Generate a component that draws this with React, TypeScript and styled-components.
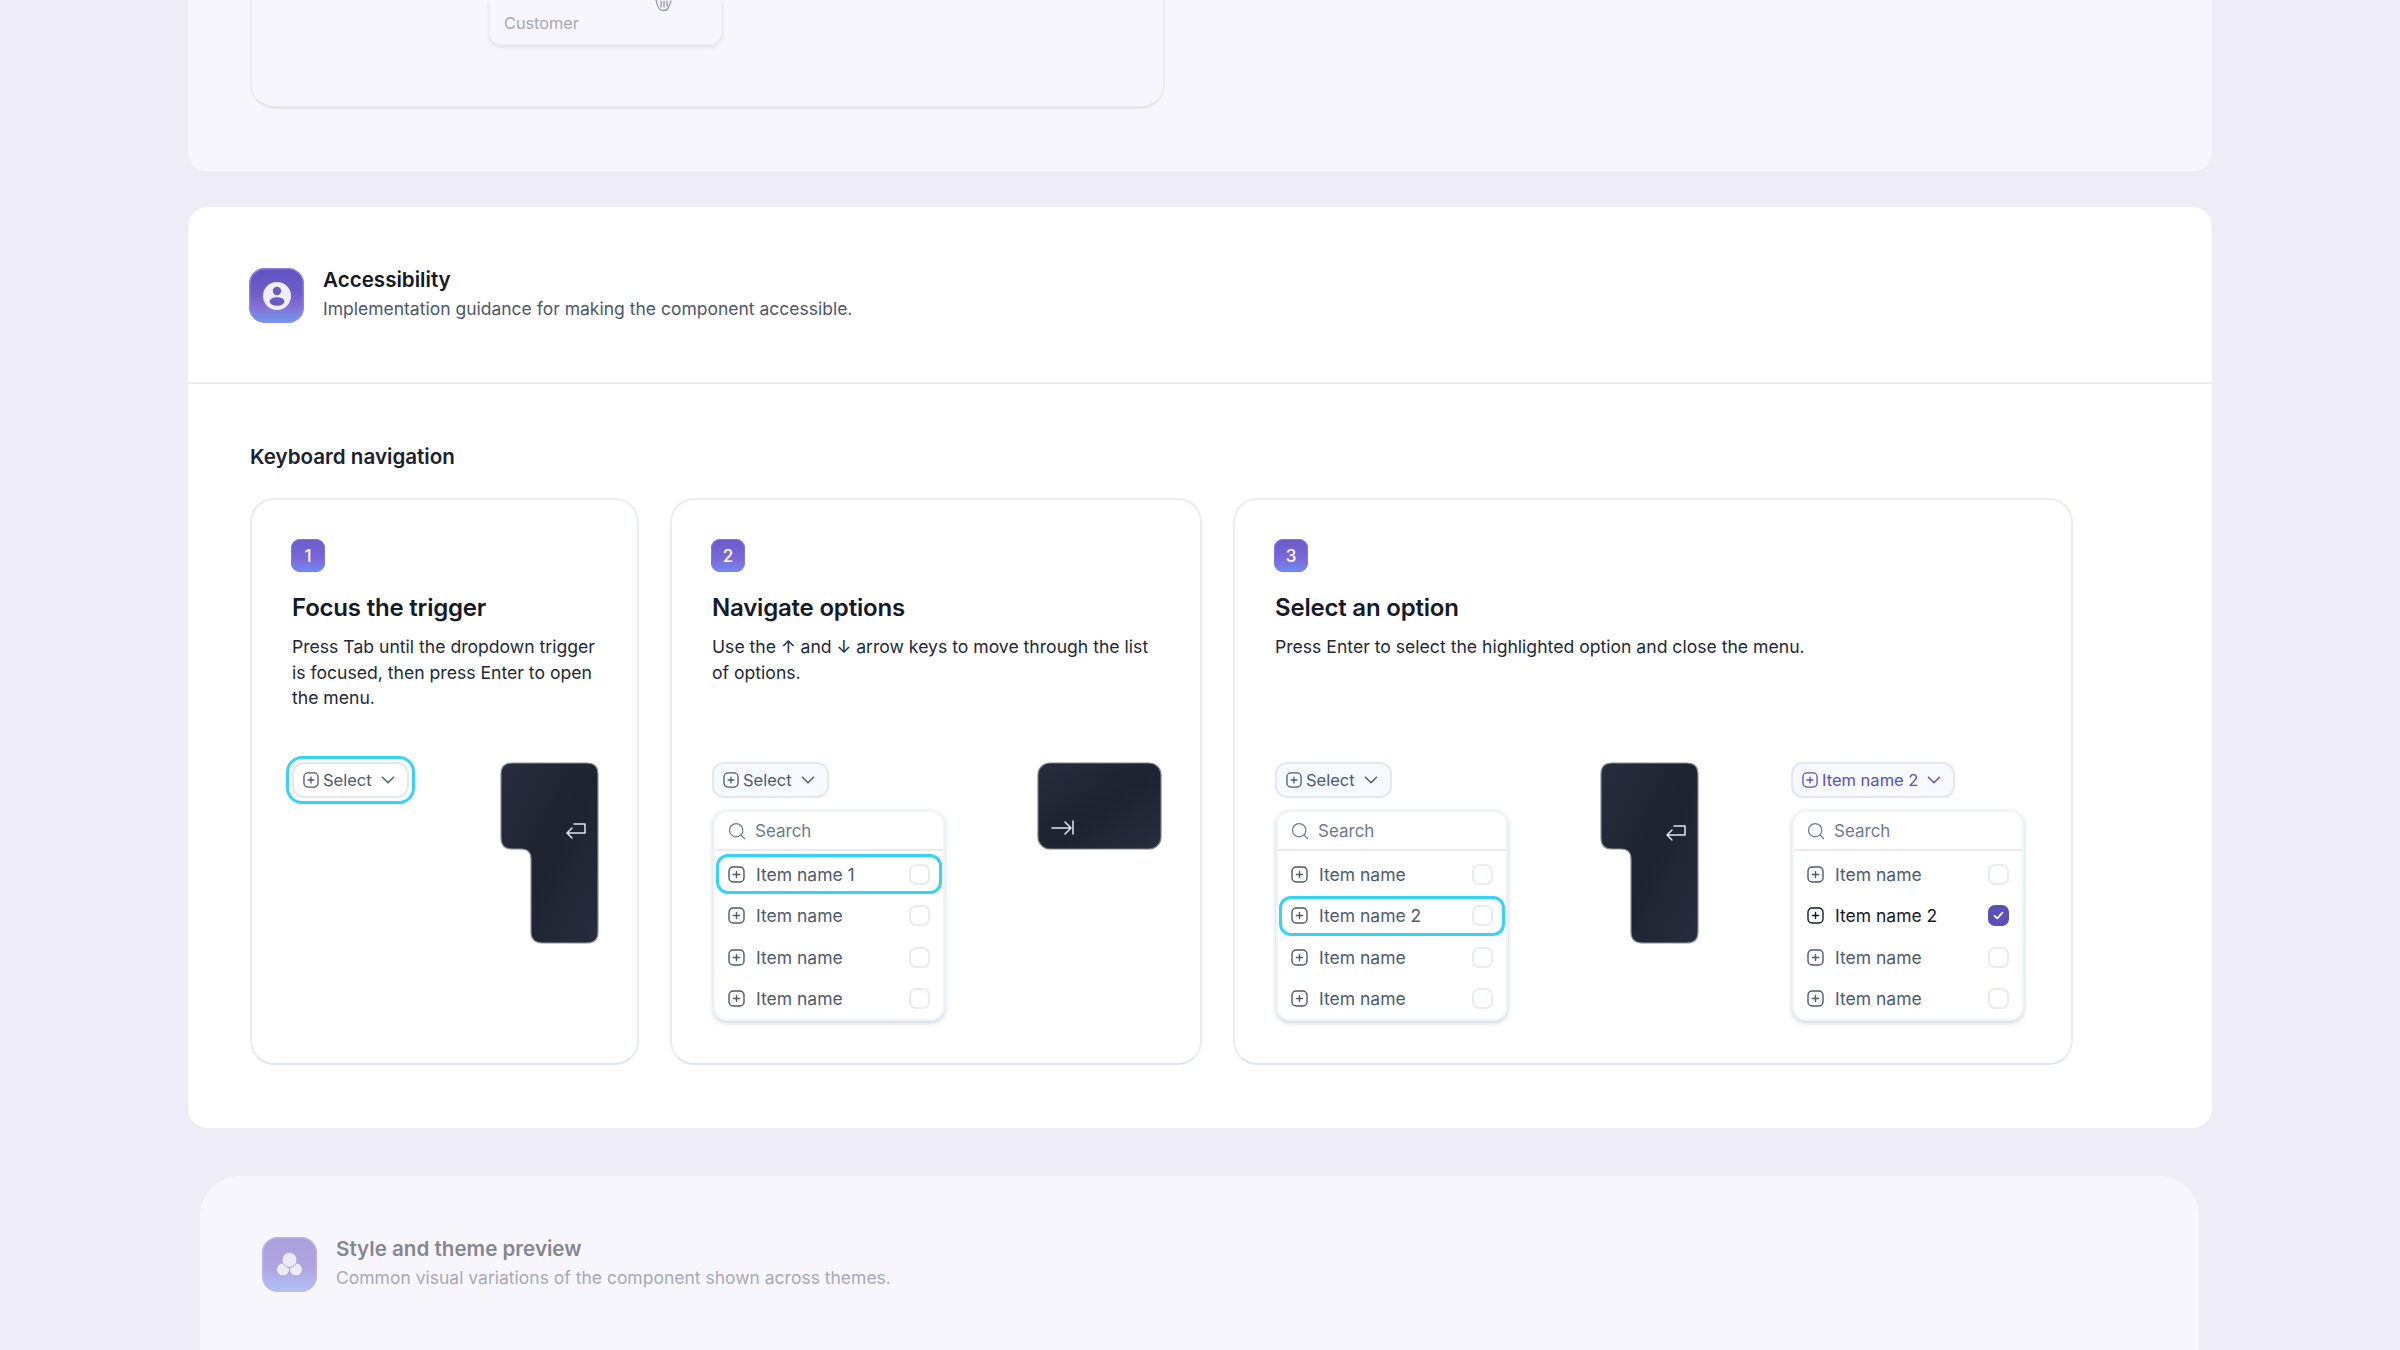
import React from 'react';
import styled, { createGlobalStyle } from 'styled-components';
import { ChevronDown, Search } from 'lucide-react';

const GlobalStyle = createGlobalStyle`
  html, body {
    margin: 0;
    padding: 0;
    background: #eeecf7;
    font-family: Inter, "Liberation Sans", sans-serif;
  }
  * {
    box-sizing: border-box;
  }
`;

const Page = styled.div`
  width: 2400px;
  height: 1350px;
  overflow: hidden;
  padding: 0 188px;
  background: #eeecf7;
`;

const UsagePanel = styled.section`
  height: 171px;
  padding: 0 62px;
  background: #f7f6fc;
  border-radius: 0 0 20px 20px;
`;

const UsageCard = styled.div`
  width: 915px;
  height: 109px;
  padding-left: 237px;
  background: #f7f6fc;
  border: 2px solid #ebebf1;
  border-top: 0;
  border-bottom: 3px solid #e6e6ee;
  border-radius: 0 0 24px 24px;
`;

const CustomerCard = styled.div`
  position: relative;
  width: 233px;
  height: 45px;
  padding: 14px 0 0 14px;
  background: #f7f6fc;
  border: 1px solid #eeeef4;
  border-top: 0;
  border-radius: 0 0 12px 12px;
  box-shadow: 0 2px 4px #dfdfe8;
  color: #a6a8b5;
  font-size: 16.3px;
  line-height: 18px;
`;

const CustomerIcon = styled.svg`
  position: absolute;
  top: -1px;
  left: 162px;
  width: 22px;
  height: 12px;
`;

const MainPanel = styled.section`
  height: 921px;
  margin-top: 36px;
  background: #fff;
  border-radius: 20px;
`;

const PanelHeader = styled.header`
  display: flex;
  align-items: center;
  gap: 19px;
  height: 177px;
  padding-left: 61px;
  border-bottom: 2px solid #e8ecf1;
`;

const HeaderIcon = styled.div`
  display: flex;
  align-items: center;
  justify-content: center;
  width: 55px;
  height: 55px;
  margin-top: 2px;
  border-radius: 16px;
  background: linear-gradient(180deg, #5f52bf 0%, #6f5cc9 45%, #8670d6 72%, #6f9df0 100%);
  box-shadow: inset 0 0 0 1.5px rgba(150, 135, 235, 0.8);
`;

const HeaderText = styled.div`
  display: flex;
  flex-direction: column;
  gap: 5px;
`;

const HeaderTitle = styled.h2`
  margin: 0;
  color: #131826;
  font-size: 20.6px;
  font-weight: 600;
  line-height: 24px;
`;

const HeaderSub = styled.p`
  margin: 0;
  color: #4d566b;
  font-size: 17.5px;
  line-height: 24px;
`;

const PanelBody = styled.div`
  padding: 59px 62px 0;
`;

const SectionTitle = styled.h3`
  margin: 0 0 27px;
  color: #1b2130;
  font-size: 20.6px;
  font-weight: 600;
  line-height: 28px;
`;

const Steps = styled.div`
  display: flex;
  gap: 31px;
`;

const StepCard = styled.article<{ $width: number; $right: number }>`
  width: ${(p) => p.$width}px;
  height: 567px;
  padding: 39px ${(p) => p.$right}px 0 40px;
  border: 2px solid #e9edf3;
  border-bottom-color: #e1e6ed;
  border-radius: 24px;
`;

const StepBadge = styled.div`
  display: flex;
  align-items: center;
  justify-content: center;
  width: 34px;
  height: 33px;
  margin-left: -1px;
  border-radius: 9px;
  color: #fff;
  font-size: 17px;
  font-weight: 500;
  background: linear-gradient(180deg, #6a5ccb 0%, #7a68d8 60%, #6f8df0 100%);
  box-shadow: inset 0 0 0 1px rgba(130, 120, 235, 0.9);
`;

const StepTitle = styled.h4`
  margin: 20px 0 10px;
  color: #141a29;
  font-size: 24px;
  font-weight: 600;
  letter-spacing: -0.2px;
  line-height: 32px;
`;

const StepText = styled.p<{ $maxWidth: number }>`
  max-width: ${(p) => p.$maxWidth}px;
  height: 77px;
  margin: 0 0 51px;
  color: #222838;
  font-size: 17.6px;
  line-height: 25.5px;
`;

const Demo = styled.div`
  display: flex;
  align-items: flex-start;
  justify-content: space-between;
`;

const SelectColumn = styled.div`
  display: flex;
  flex-direction: column;
  align-items: flex-start;
  gap: 12px;
  width: 232px;
`;

const FocusRing = styled.div`
  padding: 3px;
  margin: -6px 0 0 -6px;
  border: 3px solid #35d3f7;
  border-radius: 16px;
`;

const Trigger = styled.div<{ $active?: boolean; $focused?: boolean }>`
  display: flex;
  align-items: center;
  gap: 4px;
  height: 36px;
  padding: 0 10px 0 9px;
  background: ${(p) => (p.$focused ? '#fff' : '#f6f9fe')};
  border: 2px solid #e2e8f0;
  border-radius: 12px;
  color: ${(p) => (p.$active ? '#5b4fc0' : '#4d5a70')};
  font-size: 16.5px;
  white-space: nowrap;
  svg:last-child {
    margin: 0 -2px 0 1px;
  }
`;

const Menu = styled.div`
  width: 232px;
  height: 211px;
  margin-left: 1px;
  background: #fff;
  border: 2px solid #f0f3f7;
  border-radius: 14px;
  box-shadow: 0 2px 5px rgba(100, 116, 139, 0.32);
`;

const MenuSearch = styled.div`
  display: flex;
  align-items: center;
  gap: 8px;
  height: 39px;
  padding-left: 12px;
  border-bottom: 2px solid #e8ecf1;
  color: #6d7a90;
  font-size: 17px;
`;

const MenuList = styled.ul`
  margin: 0;
  padding: 3px 1px 0;
  list-style: none;
`;

const MenuRow = styled.li<{ $highlight?: boolean; $selected?: boolean }>`
  display: flex;
  align-items: center;
  gap: 11px;
  height: 40px;
  margin-bottom: 1.5px;
  padding: 0 ${(p) => (p.$highlight ? 9 : 12)}px 0 ${(p) => (p.$highlight ? 9 : 12)}px;
  border: ${(p) => (p.$highlight ? '3px solid #35d3f7' : '0')};
  border-radius: 12px;
  color: ${(p) => (p.$selected ? '#141a29' : '#4d5a70')};
  font-size: 17.5px;
`;

const RowLabel = styled.span`
  flex: 1;
`;

const Check = styled.span<{ $on?: boolean }>`
  display: flex;
  align-items: center;
  justify-content: center;
  width: 21px;
  height: 21px;
  background: ${(p) => (p.$on ? '#5b4fb9' : '#fff')};
  border: 2px solid ${(p) => (p.$on ? '#5b4fb9' : '#e8ecf2')};
  border-radius: 7px;
`;

const KeyArt = styled.svg`
  display: block;
  flex: none;
`;

const FadedPanel = styled.section`
  display: flex;
  align-items: flex-start;
  gap: 19px;
  height: 220px;
  margin: 48px 13px 0 12px;
  padding: 61px 62px 0;
  background: #f7f6fc;
  border-radius: 40px;
`;

const FadedIcon = styled(HeaderIcon)`
  margin-top: 0;
  background: linear-gradient(180deg, #a9a1dc 0%, #b0a4e0 55%, #afc4f4 100%);
  box-shadow: inset 0 0 0 1.5px rgba(190, 180, 240, 0.8);
`;

const FadedTitle = styled(HeaderTitle)`
  color: #868691;
`;

const FadedSub = styled(HeaderSub)`
  color: #a8a9b8;
`;

function PlusBox({ size = 17, color = 'currentColor' }: { size?: number; color?: string }) {
  return (
    <svg width={size} height={size} viewBox="0 0 17 17" fill="none" stroke={color} strokeWidth="1.4" strokeLinecap="round">
      <rect x="1" y="1" width="15" height="15" rx="4.2" />
      <path d="M8.5 5.4v6.2M5.4 8.5h6.2" />
    </svg>
  );
}

function KeyGradient({ id }: { id: string }) {
  return (
    <defs>
      <linearGradient id={id} x1="0" y1="0" x2="1" y2="1">
        <stop offset="0" stopColor="#282d3d" />
        <stop offset="0.5" stopColor="#1e2332" />
        <stop offset="1" stopColor="#282d3d" />
      </linearGradient>
    </defs>
  );
}

function EnterKey({ id, width, height, notchX, notchY, glyphX, glyphY }: {
  id: string;
  width: number;
  height: number;
  notchX: number;
  notchY: number;
  glyphX: number;
  glyphY: number;
}) {
  return (
    <KeyArt width={width} height={height} viewBox={`0 0 ${width} ${height}`} fill="none">
      <KeyGradient id={id} />
      <path
        d={`M12 1H${width - 12}Q${width - 1} 1 ${width - 1} 12V${height - 12}Q${width - 1} ${height - 1} ${width - 12} ${height - 1}H${notchX + 12}Q${notchX} ${height - 1} ${notchX} ${height - 12}V${notchY + 10}Q${notchX} ${notchY} ${notchX - 10} ${notchY}H12Q1 ${notchY} 1 ${notchY - 11}V12Q1 1 12 1Z`}
        fill={`url(#${id})`}
        stroke="#8d8f96"
        strokeWidth="1.2"
      />
      <path
        d={`M${glyphX + 19} ${glyphY + 1}V${glyphY + 10}H${glyphX + 1}M${glyphX + 6} ${glyphY + 5}L${glyphX + 1} ${glyphY + 10}L${glyphX + 6} ${glyphY + 15}M${glyphX + 19} ${glyphY + 1}H${glyphX + 8}`}
        stroke="#e4e5ea"
        strokeWidth="1.5"
        strokeLinecap="round"
        strokeLinejoin="round"
      />
    </KeyArt>
  );
}

function TabKey() {
  return (
    <KeyArt width={125} height={88} viewBox="0 0 125 88" fill="none">
      <KeyGradient id="tabKey" />
      <rect x="1" y="1" width="123" height="86" rx="12" fill="url(#tabKey)" stroke="#7f8188" strokeWidth="1.2" />
      <path d="M15 66H34M28 60L34 66L28 72M36 59V72" stroke="#e4e5ea" strokeWidth="1.5" strokeLinecap="round" strokeLinejoin="round" />
    </KeyArt>
  );
}

function SelectMenu({ label, items, highlight, selected, active }: {
  label: string;
  items: string[];
  highlight?: number;
  selected?: number;
  active?: boolean;
}) {
  return (
    <SelectColumn>
      <Trigger $active={active}>
        <PlusBox size={16} />
        {label}
        <ChevronDown size={22} strokeWidth={1.6} />
      </Trigger>
      <Menu>
        <MenuSearch>
          <Search size={20} strokeWidth={1.5} />
          Search
        </MenuSearch>
        <MenuList>
          {items.map((item, idx) => (
            <MenuRow key={idx} $highlight={highlight === idx} $selected={selected === idx}>
              <PlusBox />
              <RowLabel>{item}</RowLabel>
              <Check $on={selected === idx}>
                {selected === idx && (
                  <svg width="11" height="9" viewBox="0 0 11 9" fill="none" stroke="#fff" strokeWidth="1.8" strokeLinecap="round" strokeLinejoin="round">
                    <path d="M1.5 4.8L4.2 7.4L9.5 1.6" />
                  </svg>
                )}
              </Check>
            </MenuRow>
          ))}
        </MenuList>
      </Menu>
    </SelectColumn>
  );
}

export default function App() {
  return (
    <Page>
      <GlobalStyle />
      <UsagePanel>
        <UsageCard>
          <CustomerCard>
            Customer
            <CustomerIcon viewBox="0 0 22 12" fill="none" stroke="#8a8c96" strokeWidth="1.2" strokeLinecap="round">
              <path d="M4 1C5 6 6 10 9 11C11 11.5 14 11.5 15 10.5C17 8.5 18 5 19 2" />
              <path d="M9 2V8M12 2V8M15 2V7" />
            </CustomerIcon>
          </CustomerCard>
        </UsageCard>
      </UsagePanel>

      <MainPanel>
        <PanelHeader>
          <HeaderIcon>
            <svg width="28" height="28" viewBox="0 0 28 28">
              <circle cx="14" cy="14" r="14" fill="#f1eef9" />
              <circle cx="14" cy="9" r="4.2" fill="#6b5bc5" />
              <ellipse cx="14" cy="19.5" rx="7.5" ry="4.2" fill="#6b5bc5" />
            </svg>
          </HeaderIcon>
          <HeaderText>
            <HeaderTitle>Accessibility</HeaderTitle>
            <HeaderSub>Implementation guidance for making the component accessible.</HeaderSub>
          </HeaderText>
        </PanelHeader>
        <PanelBody>
          <SectionTitle>Keyboard navigation</SectionTitle>
          <Steps>
            <StepCard $width={389} $right={38}>
              <StepBadge>1</StepBadge>
              <StepTitle>Focus the trigger</StepTitle>
              <StepText $maxWidth={320}>Press Tab until the dropdown trigger is focused, then press Enter to open the menu.</StepText>
              <Demo>
                <FocusRing>
                  <Trigger $focused>
                    <PlusBox size={16} />
                    Select
                    <ChevronDown size={22} strokeWidth={1.6} />
                  </Trigger>
                </FocusRing>
                <EnterKey id="enterOne" width={99} height={182} notchX={31} notchY={87} glyphX={66} glyphY={61} />
              </Demo>
            </StepCard>
            <StepCard $width={532} $right={38}>
              <StepBadge>2</StepBadge>
              <StepTitle>Navigate options</StepTitle>
              <StepText $maxWidth={440}>Use the ↑ and ↓ arrow keys to move through the list of options.</StepText>
              <Demo>
                <SelectMenu label="Select" items={['Item name 1', 'Item name', 'Item name', 'Item name']} highlight={0} />
                <TabKey />
              </Demo>
            </StepCard>
            <StepCard $width={840} $right={48}>
              <StepBadge>3</StepBadge>
              <StepTitle>Select an option</StepTitle>
              <StepText $maxWidth={700}>Press Enter to select the highlighted option and close the menu.</StepText>
              <Demo>
                <SelectMenu label="Select" items={['Item name', 'Item name 2', 'Item name', 'Item name']} highlight={1} />
                <EnterKey id="enterTwo" width={99} height={182} notchX={31} notchY={87} glyphX={66} glyphY={63} />
                <SelectMenu label="Item name 2" items={['Item name', 'Item name 2', 'Item name', 'Item name']} selected={1} active />
              </Demo>
            </StepCard>
          </Steps>
        </PanelBody>
      </MainPanel>

      <FadedPanel>
        <FadedIcon>
          <svg width="27" height="25" viewBox="0 0 27 25" fill="#eeebf9" stroke="#b0a4e0" strokeWidth="1">
            <circle cx="20" cy="17.5" r="6.5" />
            <circle cx="7" cy="17.5" r="6.5" />
            <circle cx="13.5" cy="8" r="7.5" />
          </svg>
        </FadedIcon>
        <HeaderText>
          <FadedTitle>Style and theme preview</FadedTitle>
          <FadedSub>Common visual variations of the component shown across themes.</FadedSub>
        </HeaderText>
      </FadedPanel>
    </Page>
  );
}
